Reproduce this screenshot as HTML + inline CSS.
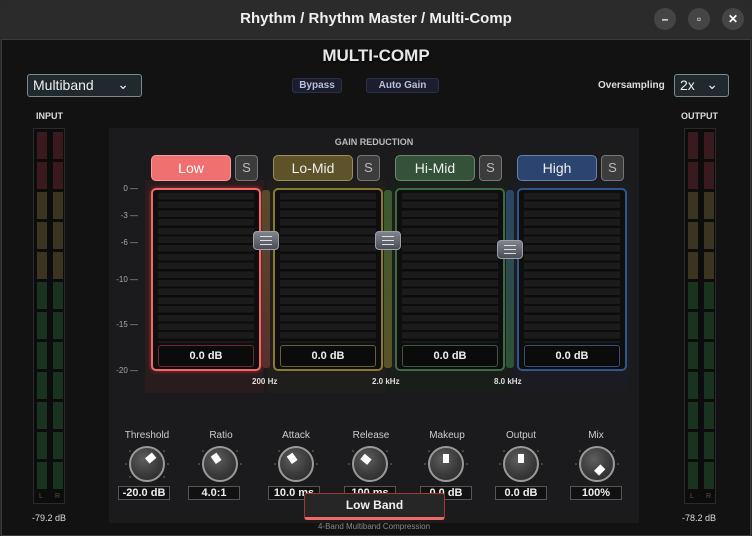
<!DOCTYPE html>
<html><head><meta charset="utf-8"><style>
*{margin:0;padding:0;box-sizing:border-box}
body{width:752px;height:536px;background:#2a2a2a;font-family:"Liberation Sans",sans-serif;position:relative;overflow:hidden;color:#ddd}
.a{position:absolute}
.title{left:0;top:0;width:752px;height:38px;background:#2b2b2b;border-radius:10px 10px 0 0;text-align:center;line-height:38px;font-weight:bold;font-size:15px;color:#f0f0f0}
.wb{width:22px;height:22px;border-radius:50%;background:#454545;top:8px;color:#fff;font-size:12px;text-align:center;line-height:22px;font-weight:bold}
.body{left:1px;top:39px;width:750px;height:497px;background:#121212;border:1px solid #3a3a3a}
.sel{border:1px solid #7c8a90;background:#202a2e;border-radius:3px;color:#eee;font-size:14px;line-height:20px;padding-left:5px}
.tb{background:#1c1e30;border:1px solid #2c2f48;border-radius:3px;font-size:10px;font-weight:bold;color:#b8bfd8;text-align:center;line-height:13px}
.lbl{font-size:9px;font-weight:bold;color:#ddd}
.meter{width:32px;height:376px;border:1px solid #2a2a2a;background:#0c0c0c}
.col{width:10px;height:360px;top:3px;background:linear-gradient(#3a1a1e 0 27px,transparent 27px 30px,#3a1a1e 30px 57px,transparent 57px 60px,#3a3420 60px 87px,transparent 87px 90px,#3a3420 90px 117px,transparent 117px 120px,#3a3420 120px 147px,transparent 147px 150px,#1a3320 150px 177px,transparent 177px 180px,#1a3320 180px 207px,transparent 207px 210px,#1a3320 210px 237px,transparent 237px 240px,#1a3320 240px 267px,transparent 267px 270px,#1a3320 270px 297px,transparent 297px 300px,#1a3320 300px 327px,transparent 327px 330px,#1a3320 330px 357px,transparent 357px)}
.lr{font-size:7px;color:#555;top:364px}
.panel{left:109px;top:128px;width:530px;height:395px;background:#1b1b1d}
.bcol{top:52px;width:119px;height:213px}
.band{height:26px;border-radius:5px;font-size:14px;text-align:center;line-height:24px;border:1px solid #888}
.s{width:23px;height:26px;border-radius:4px;background:#3c3c3c;border:1px solid #777;color:#bbb;font-size:13px;text-align:center;line-height:24px}
.box{width:110px;height:183px;top:188px;border:2px solid;border-radius:5px;background:#0e0e0e}
.stripes{left:5px;right:5px;top:3px;height:150px;background:repeating-linear-gradient(#1b1b1b 0 6.5px,#0c0c0c 6.5px 8.7px);border-radius:2px}
.rd{left:5px;right:5px;bottom:2px;height:22px;border:1px solid;border-radius:3px;background:#0b0b0b;color:#eee;font-size:11px;font-weight:bold;text-align:center;line-height:20px}
.xb{width:8px;height:178px;top:190px;border-radius:3px}
.hd{width:26px;height:19px;border-radius:4px;background:linear-gradient(#80838c,#4a4d56);border:1px solid #9ca0a8}
.hd::before{content:"";position:absolute;left:6px;right:6px;top:4px;height:9px;background:repeating-linear-gradient(#ddd 0 1px,transparent 1px 4px)}
.sc{font-size:8px;color:#aaa;text-align:right;width:30px;left:108px}
.fq{font-size:8px;font-weight:bold;color:#ddd}
.kl{font-size:10px;color:#ccc;text-align:center;width:70px;top:430px}
.kv{width:52px;height:14px;top:486px;border:1px solid #555;font-size:11px;font-weight:bold;color:#eee;text-align:center;line-height:12px;background:#111}
.kn{width:36px;height:36px;top:446px;border-radius:50%;border:2px solid #9a9a9a;background:radial-gradient(circle at 40% 35%,#5e5e5e,#3a3a3a 55%,#262626)}
</style></head><body>
<div class="a title">Rhythm / Rhythm Master / Multi-Comp</div>
<div class="a wb" style="left:654px">–</div>
<div class="a wb" style="left:688px">▫</div>
<div class="a wb" style="left:722px">✕</div>
<div class="a body"></div>
<div class="a" style="left:0;top:46px;width:752px;text-align:center;font-size:17px;font-weight:bold;color:#e8e8e8;text-shadow:0 1px 2px #000">MULTI-COMP</div>
<div class="a sel" style="left:27px;top:74px;width:115px;height:23px">Multiband<span style="position:absolute;right:12px;top:-1px">⌄</span></div>
<div class="a tb" style="left:292px;top:78px;width:50px;height:15px">Bypass</div>
<div class="a tb" style="left:366px;top:78px;width:73px;height:15px">Auto Gain</div>
<div class="a" style="left:598px;top:80px;font-size:10px;font-weight:bold;color:#ddd">Oversampling</div>
<div class="a sel" style="left:674px;top:74px;width:55px;height:23px">2x<span style="position:absolute;right:10px;top:-1px">⌄</span></div>
<div class="a lbl" style="left:36px;top:111px">INPUT</div>
<div class="a lbl" style="left:681px;top:111px">OUTPUT</div>
<div class="a meter" style="left:33px;top:128px"><div class="a col" style="left:3px"></div><div class="a col" style="left:19px"></div><div class="a lr" style="left:5px">L</div><div class="a lr" style="left:21px">R</div></div>
<div class="a meter" style="left:684px;top:128px"><div class="a col" style="left:3px"></div><div class="a col" style="left:19px"></div><div class="a lr" style="left:5px">L</div><div class="a lr" style="left:21px">R</div></div>
<div class="a" style="left:32px;top:513px;font-size:9px;color:#ddd">-79.2 dB</div>
<div class="a" style="left:682px;top:513px;font-size:9px;color:#ddd">-78.2 dB</div>
<div class="a panel">
<div class="a" style="left:0;top:9px;width:530px;text-align:center;font-size:9px;font-weight:bold;color:#bbb">GAIN REDUCTION</div>
<div class="a bcol" style="left:36px;background:#2a1c1e"></div>
<div class="a bcol" style="left:158px;background:#1f1e1a"></div>
<div class="a bcol" style="left:280px;background:#1a1e1b"></div>
<div class="a bcol" style="left:402px;background:#1a1c22"></div>
</div>
<div class="a band" style="left:151px;top:155px;width:80px;background:#f07070;color:#fff;border-color:#f9a">Low</div>
<div class="a s" style="left:235px;top:155px">S</div>
<div class="a band" style="left:273px;top:155px;width:80px;background:#5e5228;color:#eee;border-color:#9a8f60">Lo-Mid</div>
<div class="a s" style="left:357px;top:155px">S</div>
<div class="a band" style="left:395px;top:155px;width:80px;background:#34523a;color:#eee;border-color:#6a8a6e">Hi-Mid</div>
<div class="a s" style="left:479px;top:155px">S</div>
<div class="a band" style="left:517px;top:155px;width:80px;background:#2c4470;color:#eee;border-color:#6a80a8">High</div>
<div class="a s" style="left:601px;top:155px">S</div>
<div class="a sc" style="top:184px">0 —</div>
<div class="a sc" style="top:211px">-3 —</div>
<div class="a sc" style="top:238px">-6 —</div>
<div class="a sc" style="top:275px">-10 —</div>
<div class="a sc" style="top:320px">-15 —</div>
<div class="a sc" style="top:366px">-20 —</div>
<div class="a box" style="left:151px;border-color:#f06a6a;box-shadow:0 0 4px #a33"><div class="a stripes"></div><div class="a rd" style="border-color:#6a2a2e">0.0 dB</div></div>
<div class="a box" style="left:273px;border-color:#8a7a30"><div class="a stripes"></div><div class="a rd" style="border-color:#6a6030">0.0 dB</div></div>
<div class="a box" style="left:395px;border-color:#3f6a45"><div class="a stripes"></div><div class="a rd" style="border-color:#3a5a3e">0.0 dB</div></div>
<div class="a box" style="left:517px;border-color:#34558a"><div class="a stripes"></div><div class="a rd" style="border-color:#34507a">0.0 dB</div></div>
<div class="a xb" style="left:262px;background:linear-gradient(#5a4a2a,#5a2e2e)"></div>
<div class="a xb" style="left:384px;background:linear-gradient(#3a5a30,#5a5428)"></div>
<div class="a xb" style="left:506px;background:linear-gradient(#2c4466,#2e5234)"></div>
<div class="a hd" style="left:253px;top:231px"></div>
<div class="a hd" style="left:375px;top:231px"></div>
<div class="a hd" style="left:497px;top:240px"></div>
<div class="a fq" style="left:252px;top:377px">200 Hz</div>
<div class="a fq" style="left:372px;top:377px">2.0 kHz</div>
<div class="a fq" style="left:494px;top:377px">8.0 kHz</div>

<div class="a kn" style="left:129px"></div>
<div class="a kn" style="left:202px"></div>
<div class="a kn" style="left:278px"></div>
<div class="a kn" style="left:352px"></div>
<div class="a kn" style="left:428px"></div>
<div class="a kn" style="left:503px"></div>
<div class="a kn" style="left:579px"></div>
<svg class="a" style="left:0;top:0" width="752" height="536">
<g fill="#fff">
<rect x="-3" y="-5" width="7" height="9" transform="translate(150,458) rotate(50)"/>
<rect x="-3" y="-5" width="7" height="9" transform="translate(216,459) rotate(-35)"/>
<rect x="-3" y="-5" width="7" height="9" transform="translate(292,459) rotate(-35)"/>
<rect x="-3" y="-5" width="7" height="9" transform="translate(366,460) rotate(-50)"/>
<rect x="-3" y="-5" width="6" height="9" transform="translate(446,459)"/>
<rect x="-3" y="-5" width="6" height="9" transform="translate(521,459)"/>
<rect x="-3" y="-5" width="7" height="9" transform="translate(599,470) rotate(45)"/>
</g>
<g fill="#777">
<circle cx="126" cy="464" r=".8"/><circle cx="168" cy="464" r=".8"/><circle cx="130" cy="451" r=".8"/><circle cx="164" cy="451" r=".8"/><circle cx="130" cy="477" r=".8"/><circle cx="164" cy="477" r=".8"/>
<circle cx="199" cy="464" r=".8"/><circle cx="241" cy="464" r=".8"/><circle cx="203" cy="451" r=".8"/><circle cx="237" cy="451" r=".8"/>
<circle cx="275" cy="464" r=".8"/><circle cx="317" cy="464" r=".8"/><circle cx="279" cy="451" r=".8"/><circle cx="313" cy="451" r=".8"/>
<circle cx="349" cy="464" r=".8"/><circle cx="391" cy="464" r=".8"/><circle cx="353" cy="451" r=".8"/><circle cx="387" cy="451" r=".8"/>
<circle cx="425" cy="464" r=".8"/><circle cx="467" cy="464" r=".8"/><circle cx="429" cy="451" r=".8"/><circle cx="463" cy="451" r=".8"/>
<circle cx="500" cy="464" r=".8"/><circle cx="542" cy="464" r=".8"/><circle cx="504" cy="451" r=".8"/><circle cx="538" cy="451" r=".8"/>
<circle cx="576" cy="464" r=".8"/><circle cx="618" cy="464" r=".8"/><circle cx="580" cy="451" r=".8"/><circle cx="614" cy="451" r=".8"/>
</g>
</svg>
<div class="a kl" style="left:112px">Threshold</div>
<div class="a kl" style="left:186px">Ratio</div>
<div class="a kl" style="left:261px">Attack</div>
<div class="a kl" style="left:336px">Release</div>
<div class="a kl" style="left:412px">Makeup</div>
<div class="a kl" style="left:486px">Output</div>
<div class="a kl" style="left:561px">Mix</div>
<div class="a kv" style="left:118px">-20.0 dB</div>
<div class="a kv" style="left:188px">4.0:1</div>
<div class="a kv" style="left:268px">10.0 ms</div>
<div class="a kv" style="left:344px">100 ms</div>
<div class="a kv" style="left:420px">0.0 dB</div>
<div class="a kv" style="left:495px">0.0 dB</div>
<div class="a kv" style="left:570px">100%</div>
<div class="a" style="left:304px;top:493px;width:141px;height:27px;background:#262626;border:1px solid #a33;border-bottom:3px solid #f06a6a;border-radius:3px;text-align:center;font-size:12px;font-weight:bold;color:#eee;line-height:22px">Low Band</div>
<div class="a" style="left:0;top:522px;width:748px;text-align:center;font-size:8px;color:#888">4-Band Multiband Compression</div>
</body></html>
